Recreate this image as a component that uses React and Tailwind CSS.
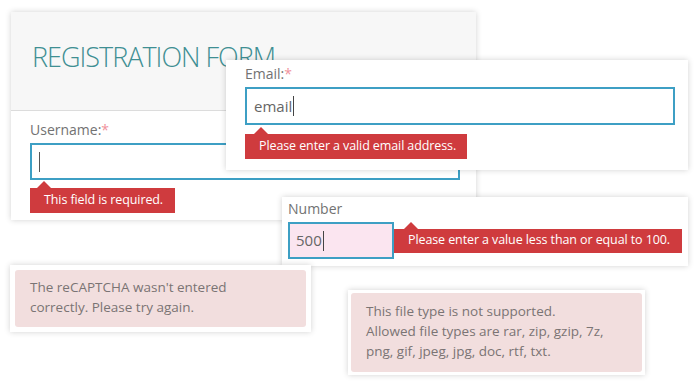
import React from 'react';

const font = { fontFamily: '"Open Sans", "Noto Sans", sans-serif' };

// red validation tooltip with its little pointer on top
const ErrorTip = ({ children, arrow = 'left-[7px]', className = '' }) => (
  <div className={`relative bg-[#cf3b3e] text-white text-[12.5px] tracking-[-0.1px] whitespace-nowrap leading-none flex items-center px-[14px] ${className}`}>
    <span className={`absolute -top-[7px] ${arrow} w-0 h-0 border-l-[7px] border-r-[7px] border-b-[7px] border-l-transparent border-r-transparent border-b-[#cf3b3e]`} />
    {children}
  </div>
);

const Caret = () => <span className="w-px h-[20px] bg-[#444] ml-px" />;

const Label = ({ children, required }) => (
  <label className="block text-[14px] leading-[20px] text-[#727272]">
    {children}
    {required && <span className="text-[#f0919c]">*</span>}
  </label>
);

const App = () => {
  return (
    <div className="relative w-[700px] h-[389px] bg-white overflow-hidden" style={font}>
      {/* Registration form card */}
      <div className="absolute left-[11px] top-[12px] w-[465px] h-[208px] bg-white shadow-[0_0_6px_rgba(0,0,0,0.18)] flex flex-col">
        <div className="h-[99px] shrink-0 bg-[#f7f7f7] border-b border-[#dcdcdc] pl-[21px] pt-[31px]">
          <h1 className="text-[27px] font-light text-[#3f8f93] tracking-[-1px] leading-none">REGISTRATION FORM</h1>
        </div>
        <div className="flex flex-col items-start px-[19px] pt-[9px]">
          <Label required>Username:</Label>
          <div className="mt-[3px] h-[37px] w-[430px] border-2 border-[#3d9fc4] flex items-center pl-[7px]">
            <span className="w-px h-[20px] bg-[#555]" />
          </div>
          <ErrorTip className="mt-[8px] w-[145px] h-[25px]">This field is required.</ErrorTip>
        </div>
      </div>

      {/* Email card */}
      <div className="absolute left-[226px] top-[60px] w-[462px] h-[110px] bg-white shadow-[0_0_6px_rgba(0,0,0,0.18)] flex flex-col items-start px-[19px] pt-[4px]">
        <Label required>Email:</Label>
        <div className="mt-[3px] w-[430px] h-[38px] border-2 border-[#3d9fc4] flex items-center pl-[7px] text-[15px] text-[#666]">
          email<Caret />
        </div>
        <ErrorTip arrow="left-[9px]" className="mt-[9px] w-[222px] h-[25px]">Please enter a valid email address.</ErrorTip>
      </div>

      {/* Number card */}
      <div className="absolute left-[282px] top-[197px] w-[406px] h-[69px] bg-white shadow-[0_0_6px_rgba(0,0,0,0.18)] flex flex-col px-[6px] pt-[2px]">
        <Label>Number</Label>
        <div className="mt-[3px] flex items-center">
          <div className="w-[107px] h-[37px] border-2 border-[#3d9fc4] bg-[#fbe5f0] flex items-center pl-[6px] text-[15px] text-[#666]">
            500<Caret />
          </div>
          <ErrorTip arrow="left-[10px]" className="w-[288px] h-[24px]">Please enter a value less than or equal to 100.</ErrorTip>
        </div>
      </div>

      {/* reCAPTCHA message */}
      <div className="absolute left-[10px] top-[265px] w-[301px] h-[67px] bg-white p-[5px] shadow-[0_0_6px_rgba(0,0,0,0.18)]">
        <div className="h-full rounded-[3px] bg-[#f2dede] px-[15px] pt-[7px] text-[13.5px] leading-[20px] text-[#7a7474]">
          The reCAPTCHA wasn't entered<br />correctly. Please try again.
        </div>
      </div>

      {/* File type message */}
      <div className="absolute left-[348px] top-[290px] w-[297px] h-[85px] bg-white p-[3px] shadow-[0_0_6px_rgba(0,0,0,0.18)]">
        <div className="h-full rounded-[3px] bg-[#f2dede] px-[15px] pt-[8px] text-[13.5px] leading-[20px] text-[#7a7474]">
          This file type is not supported.<br />
          Allowed file types are rar, zip, gzip, 7z,<br />
          png, gif, jpeg, jpg, doc, rtf, txt.
        </div>
      </div>
    </div>
  );
};

export default App;
